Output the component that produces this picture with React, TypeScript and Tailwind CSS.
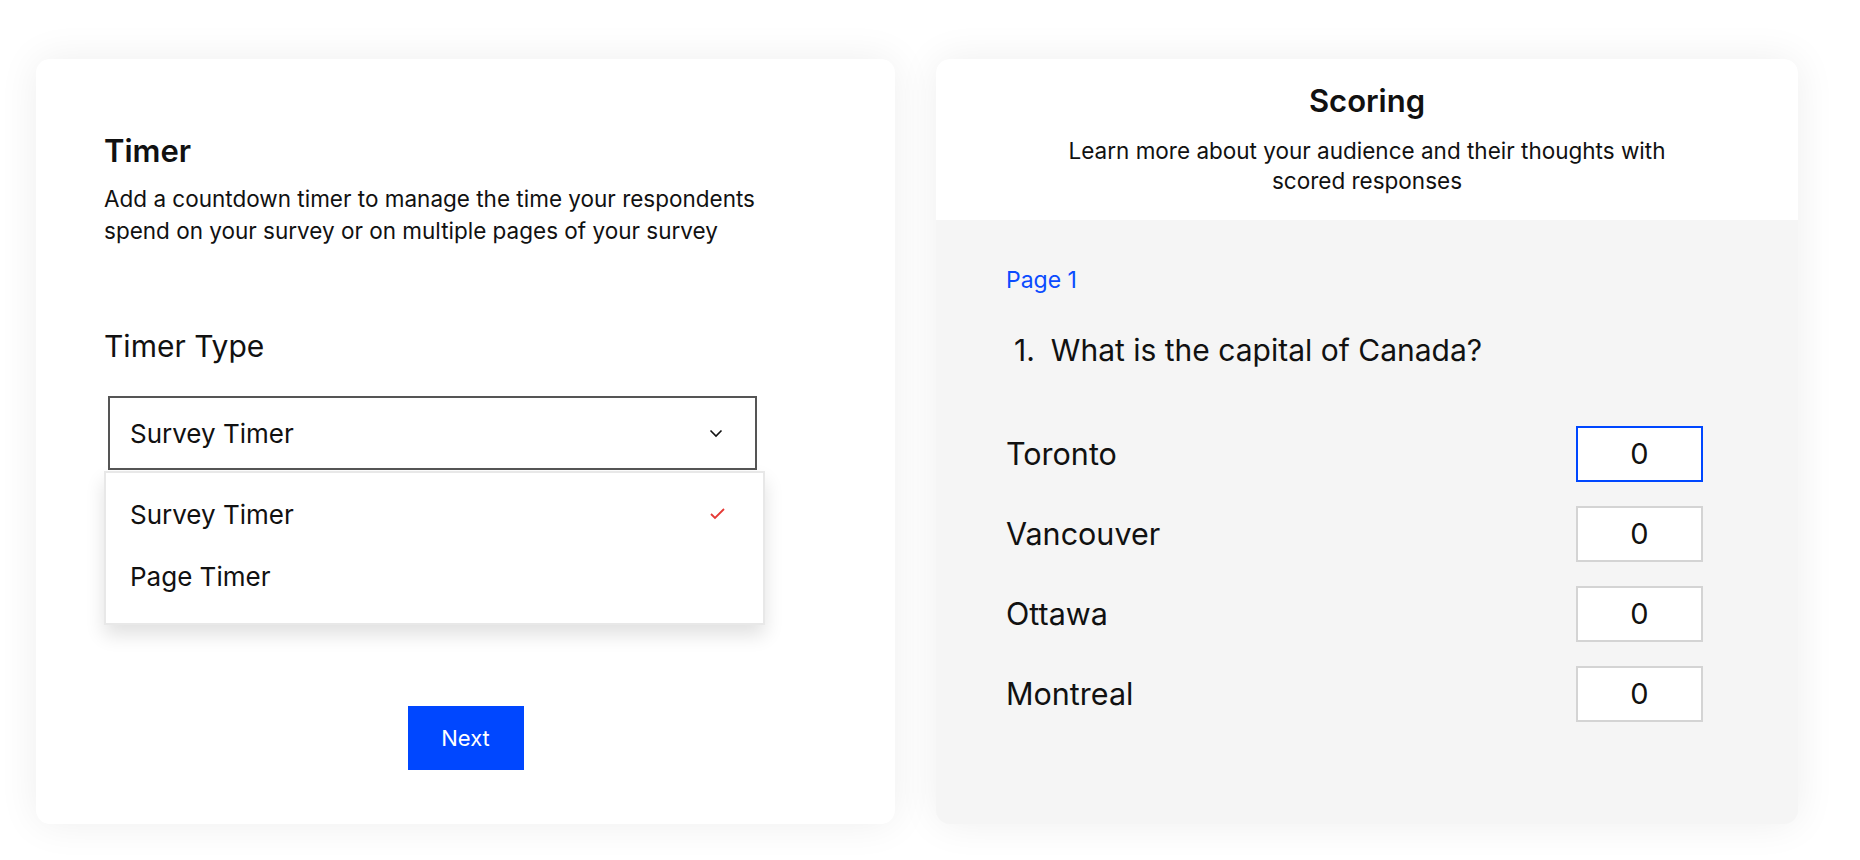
import React from 'react'

const ROWS = [
  { city: 'Toronto', score: '0', active: true },
  { city: 'Vancouver', score: '0', active: false },
  { city: 'Ottawa', score: '0', active: false },
  { city: 'Montreal', score: '0', active: false },
]

const Chevron = () => (
  <svg width="14" height="9" viewBox="0 0 14 9" fill="none" aria-hidden="true">
    <polyline points="1.5,1.5 7,7 12.5,1.5" stroke="#111" strokeWidth="1.6" />
  </svg>
)

const Check = () => (
  <svg width="15" height="12" viewBox="0 0 15 12" fill="none" aria-hidden="true">
    <polyline points="1,6 5,10 14,1" stroke="#e53935" strokeWidth="1.8" />
  </svg>
)

const TimerCard = () => (
  <div className="flex h-[765px] w-[859px] flex-col rounded-[14px] bg-white px-[68px] pt-[74px] shadow-[0_0_40px_rgba(0,0,0,0.07)]">
    <h2 className="text-[31px] font-semibold leading-[36px] text-[#111]">Timer</h2>
    <p className="mt-[14px] text-[22.5px] leading-[32px] text-[#111]">
      Add a countdown timer to manage the time your respondents
      <br />
      spend on your survey or on multiple pages of your survey
    </p>

    <h3 className="mt-[81px] text-[30px] leading-[36px] text-[#111]">Timer Type</h3>

    <div className="relative mt-[32px]">
      <div className="ml-[4px] flex h-[74px] w-[649px] items-center justify-between border-2 border-[#555] bg-white pl-[20px] pr-[32px]">
        <span className="text-[26px] text-[#111]">Survey Timer</span>
        <Chevron />
      </div>

      <div className="absolute left-0 top-[75px] z-10 flex h-[154px] w-[661px] flex-col border-2 border-[#e8e8e8] bg-white pt-[17px] shadow-[0_10px_18px_rgba(0,0,0,0.12)]">
        <div className="flex h-[48px] items-center justify-between pl-[24px] pr-[38px]">
          <span className="text-[26px] text-[#111]">Survey Timer</span>
          <Check />
        </div>
        <div className="mt-[14px] flex h-[48px] items-center pl-[24px]">
          <span className="text-[26px] text-[#111]">Page Timer</span>
        </div>
      </div>
    </div>

    <div className="mt-[236px] flex justify-center">
      <button
        type="button"
        className="h-[64px] w-[116px] bg-[#0047ff] text-[22px] text-white"
      >
        Next
      </button>
    </div>
  </div>
)

const ScoringCard = () => (
  <div className="flex h-[765px] w-[862px] flex-col overflow-hidden rounded-[14px] bg-[#f5f5f5] shadow-[0_0_40px_rgba(0,0,0,0.07)]">
    <div className="flex h-[161px] flex-col items-center bg-white pt-[24px]">
      <h2 className="text-[31px] font-semibold leading-[36px] text-[#111]">Scoring</h2>
      <p className="mt-[17px] w-[620px] text-center text-[22.5px] leading-[30px] text-[#111]">
        Learn more about your audience and their thoughts with scored responses
      </p>
    </div>

    <div className="flex flex-col pl-[70px] pr-[95px] pt-[46px]">
      <div className="text-[23px] leading-[28px] text-[#0a4bff]">Page 1</div>
      <div className="ml-[8px] mt-[38px] flex gap-[16px] text-[30px] leading-[36px] text-[#111]">
        <span>1.</span>
        <span>What is the capital of Canada?</span>
      </div>

      <div className="mt-[58px] flex flex-col gap-[24px]">
        {ROWS.map((row) => (
          <div key={row.city} className="flex items-center justify-between">
            <span className="text-[30.5px] text-[#111]">{row.city}</span>
            <div
              className={
                row.active
                  ? 'flex h-[56px] w-[127px] items-center justify-center border-2 border-[#0047ff] bg-white text-[29px] text-[#111]'
                  : 'flex h-[56px] w-[127px] items-center justify-center border-2 border-[#d4d4d4] bg-white text-[29px] text-[#111]'
              }
            >
              {row.score}
            </div>
          </div>
        ))}
      </div>
    </div>
  </div>
)

export default function App() {
  return (
    <div className="flex h-[860px] w-[1860px] items-start gap-[41px] bg-white pl-[36px] pt-[59px] font-['Inter',sans-serif]">
      <TimerCard />
      <ScoringCard />
    </div>
  )
}
